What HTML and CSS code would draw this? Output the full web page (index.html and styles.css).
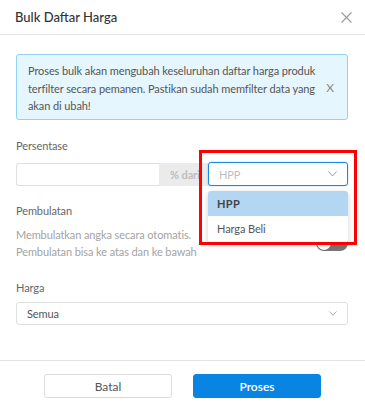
FILE: index.html
```html
<!DOCTYPE html>
<html>
<head>
<meta charset="utf-8">
<link rel="stylesheet" href="styles.css">
</head>
<body>
<div class="modal">
  <div class="modal-header">
    <span class="modal-title">Bulk Daftar Harga</span>
    <svg class="close" width="11" height="11" viewBox="0 0 11 11"><path d="M0.5 0.5L10.5 10.5M10.5 0.5L0.5 10.5" stroke="#9a9a9a" stroke-width="1.1" fill="none"/></svg>
  </div>
  <div class="modal-body">
    <div class="alert">
      <p class="alert-text">Proses bulk akan mengubah keseluruhan daftar harga produk terfilter secara pemanen. Pastikan sudah memfilter data yang akan di ubah!</p>
      <span class="alert-close">X</span>
    </div>

    <div class="field">
      <div class="label">Persentase</div>
      <div class="input-group">
        <div class="input"></div>
        <div class="addon">% dari</div>
        <div class="select-wrap">
          <div class="select focused">
            <span class="placeholder">HPP</span>
            <svg class="chev" width="9" height="6" viewBox="0 0 9 6"><path d="M0.5 0.5L4.5 5L8.5 0.5" stroke="#999" stroke-width="1" fill="none"/></svg>
          </div>
          <div class="dropdown">
            <div class="option active">HPP</div>
            <div class="option">Harga Beli</div>
          </div>
          <div class="highlight"></div>
        </div>
      </div>
    </div>

    <div class="field">
      <div class="label">Pembulatan</div>
      <div class="round-row">
        <div class="desc">Membulatkan angka secara otomatis.<br>Pembulatan bisa ke atas dan ke bawah</div>
        <div class="toggle"><span class="knob"></span></div>
      </div>
    </div>

    <div class="field last">
      <div class="label">Harga</div>
      <div class="select full">
        <span class="value">Semua</span>
        <svg class="chev" width="8" height="5" viewBox="0 0 8 5"><path d="M0.5 0.5L4 4.3L7.5 0.5" stroke="#aaa" stroke-width="1" fill="none"/></svg>
      </div>
    </div>
  </div>
  <div class="modal-footer">
    <button class="btn btn-default">Batal</button>
    <button class="btn btn-primary">Proses</button>
  </div>
</div>
</body>
</html>
```
FILE: styles.css
```css
* { box-sizing: border-box; }
html, body { margin: 0; padding: 0; background: #fff; }
body { font-family: "Lato", "Open Sans", sans-serif; font-size: 11px; letter-spacing: -0.1px; color: #555; }

.modal { width: 365px; height: 412px; background: #fff; display: flex; flex-direction: column; }

.modal-header {
  height: 35px;
  border-bottom: 1px solid #e3e3e3;
  display: flex; align-items: center; justify-content: space-between;
  padding: 0 13px 0 15px;
}
.modal-title { font-size: 13px; color: #333; font-weight: 500; letter-spacing: 0; }
.close { display: block; }

.modal-body { padding: 19px 17px 0 16px; flex: 1; }

.alert {
  position: relative;
  height: 66px;
  border: 1px solid #91d2f7;
  background: #e6f6fe;
  border-radius: 3px;
  padding: 7px 28px 0 11px;
}
.alert-text { margin: 0; line-height: 17.5px; color: #555; font-size: 11px; }
.alert-close { position: absolute; right: 13px; top: 25px; color: #888; font-size: 12px; }

.field { margin-top: 17px; }
.field + .field { margin-top: 16px; }
.label { color: #666; line-height: 18px; }

.input-group { display: flex; margin-top: 8px; height: 23px; }
.input { flex: 1; border: 1px solid #e0e0e0; border-right: none; border-radius: 3px 0 0 3px; background: #fff; }
.addon { width: 57px; background: #ebebeb; color: #bdbdbd; line-height: 23px; padding-left: 11px; font-weight: 700; }

.select-wrap { position: relative; width: 140px; margin-left: -8px; }
.select {
  height: 23px; border: 1px solid #e0e0e0; border-radius: 3px; background: #fff;
  display: flex; align-items: center; justify-content: space-between;
  padding: 0 10px 0 10px;
}
.select.focused { border: 1.5px solid #1a8ae0; height: 24px; margin-top: -1px; box-shadow: 0 0 2px rgba(26,138,224,0.4); }
.placeholder { color: #bdbdbd; }
.value { color: #555; }
.chev { display: block; }

.dropdown {
  position: absolute; left: 0; right: 0; top: 28px;
  background: #fff; border-radius: 3px;
  box-shadow: 0 2px 6px rgba(0,0,0,0.18);
  overflow: hidden; z-index: 2;
}
.option { height: 25px; line-height: 25px; padding-left: 9px; color: #555; }
.option + .option { height: 27px; line-height: 26px; }
.option.active { background: #b3d7f3; font-weight: 700; color: #444; letter-spacing: 0.3px; }

.highlight {
  position: absolute; left: -9px; right: -9px; top: -13px; height: 95px;
  border: 3px solid #f00; z-index: 3; pointer-events: none;
}

.round-row { display: flex; align-items: center; justify-content: space-between; margin-top: 6px; }
.desc { color: #a3a3a3; line-height: 17px; }
.toggle { width: 32px; height: 16px; border-radius: 8px; background: #777; position: relative; }
.knob { position: absolute; left: 1px; top: 1px; width: 14px; height: 14px; border-radius: 50%; background: #fff; box-shadow: 0 0 1px rgba(0,0,0,0.5); }

.field.last { margin-top: 19px; }
.field.last .select { margin-top: 5px; }

.modal-footer {
  height: 52px; border-top: 1px solid #e3e3e3;
  display: flex; justify-content: center; align-items: flex-start; gap: 21px;
  padding-top: 13px;
}
.btn { width: 128px; height: 24px; border-radius: 3px; font-family: inherit; font-size: 12px; cursor: pointer; }
.btn-default { background: #fff; border: 1px solid #dcdcdc; color: #555; }
.btn-primary { background: #0984e3; border: 1px solid #0984e3; color: #fff; font-weight: 600; }
```
